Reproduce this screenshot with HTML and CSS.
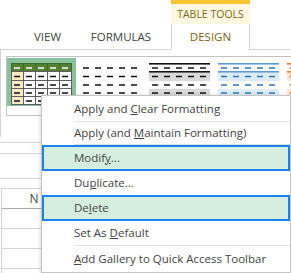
FILE: index.html
```html
<!DOCTYPE html>
<html>
<head>
<meta charset="utf-8">
<link rel="stylesheet" href="styles.css">
</head>
<body>
<div class="tabstrip">
  <div class="tab tab-view">VIEW</div>
  <div class="tab tab-formulas">FORMULAS</div>
  <div class="ctx">
    <div class="ctx-label">TABLE TOOLS</div>
    <div class="tab tab-design">DESIGN</div>
  </div>
</div>

<div class="ribbon">
  <div class="group">
    <div class="gallery">
      <div class="thumb thumb-selected">
        <svg width="61" height="42" viewBox="0 0 61 42">
          <rect width="61" height="42" fill="#fff"/>
          <rect width="61" height="9" fill="#548235"/>
          <rect x="1" y="9" width="11" height="33" fill="#fde9c4"/>
          <path d="M12.5 0V9M24.5 0V9M36.5 0V9M48.5 0V9" stroke="#3f6a26" stroke-width="1"/>
          <path d="M0.5 0V42M60.5 0V42M0 0.5H61" stroke="#3f6a26" stroke-width="1"/>
          <path d="M12.5 9V42M24.5 9V42M36.5 9V42M48.5 9V42M0.5 9V42M60.5 9V42M0 8.5H61M0 17.5H61M0 25.5H61M0 33.5H61M0 41.5H61" stroke="#5e5e5e" stroke-width="1"/>
          <path d="M3 5h6m6 0h6m6 0h6m6 0h6m6 0h6" stroke="#fff" stroke-width="1.6"/>
          <path d="M3 13.5h6m6 0h6m6 0h6m6 0h6m6 0h6M3 22h6m6 0h6m6 0h6m6 0h6m6 0h6M3 30h6m6 0h6m6 0h6m6 0h6m6 0h6M3 38h6m6 0h6m6 0h6m6 0h6m6 0h6" stroke="#111" stroke-width="1.6"/>
        </svg>
      </div>
      <div class="thumb">
        <svg width="61" height="42" viewBox="0 0 61 42">
          <path d="M3 5h6m6 0h6m6 0h6m6 0h6m6 0h6M3 13.5h6m6 0h6m6 0h6m6 0h6m6 0h6M3 22h6m6 0h6m6 0h6m6 0h6m6 0h6M3 30h6m6 0h6m6 0h6m6 0h6m6 0h6M3 38h6m6 0h6m6 0h6m6 0h6m6 0h6" stroke="#111" stroke-width="1.6"/>
        </svg>
      </div>
      <div class="thumb">
        <svg width="61" height="42" viewBox="0 0 61 42">
          <rect y="9.5" width="61" height="8.5" fill="#d9d9d9"/>
          <rect y="26" width="61" height="8.5" fill="#d9d9d9"/>
          <rect y="0" width="61" height="1.6" fill="#111"/>
          <rect y="8" width="61" height="1.6" fill="#111"/>
          <path d="M3 5h6m6 0h6m6 0h6m6 0h6m6 0h6M3 13.5h6m6 0h6m6 0h6m6 0h6m6 0h6M3 22h6m6 0h6m6 0h6m6 0h6m6 0h6M3 30h6m6 0h6m6 0h6m6 0h6m6 0h6M3 38h6m6 0h6m6 0h6m6 0h6m6 0h6" stroke="#111" stroke-width="1.6"/>
        </svg>
      </div>
      <div class="thumb">
        <svg width="61" height="42" viewBox="0 0 61 42">
          <rect y="9.5" width="61" height="8.5" fill="#ddebf7"/>
          <rect y="26" width="61" height="8.5" fill="#ddebf7"/>
          <rect y="0" width="61" height="1.6" fill="#5b9bd5"/>
          <rect y="8" width="61" height="1.6" fill="#5b9bd5"/>
          <path d="M3 5h6m6 0h6m6 0h6m6 0h6m6 0h6M3 13.5h6m6 0h6m6 0h6m6 0h6m6 0h6M3 22h6m6 0h6m6 0h6m6 0h6m6 0h6M3 30h6m6 0h6m6 0h6m6 0h6m6 0h6M3 38h6m6 0h6m6 0h6m6 0h6m6 0h6" stroke="#2e75b6" stroke-width="1.6"/>
        </svg>
      </div>
      <div class="thumb">
        <svg width="61" height="42" viewBox="0 0 61 42">
          <rect y="9.5" width="61" height="8.5" fill="#fce4d6"/>
          <rect y="26" width="61" height="8.5" fill="#fce4d6"/>
          <rect y="0" width="61" height="1.6" fill="#ed7d31"/>
          <rect y="8" width="61" height="1.6" fill="#ed7d31"/>
          <path d="M3 5h6m6 0h6m6 0h6m6 0h6m6 0h6M3 13.5h6m6 0h6m6 0h6m6 0h6m6 0h6M3 22h6m6 0h6m6 0h6m6 0h6m6 0h6M3 30h6m6 0h6m6 0h6m6 0h6m6 0h6M3 38h6m6 0h6m6 0h6m6 0h6m6 0h6" stroke="#c55a11" stroke-width="1.6"/>
        </svg>
      </div>
    </div>
  </div>
</div>

<div class="sheet">
  <div class="fline fline-1"></div>
  <div class="fline fline-2"></div>
  <div class="sheet-gap"></div>
  <div class="grid">
    <div class="colhead"><div class="col-n">N</div></div>
    <div class="row"></div>
    <div class="row"></div>
    <div class="row"></div>
    <div class="row row-end"></div>
  </div>
</div>

<div class="menu">
  <div class="item item-first">Apply and <span class="key">C</span>lear Formatting</div>
  <div class="sep"></div>
  <div class="item item-short">Apply (and <span class="key">M</span>aintain Formatting)</div>
  <div class="sep"></div>
  <div class="item item-hl">Modif<span class="key">y</span>...</div>
  <div class="item">Du<span class="key">p</span>licate...</div>
  <div class="item item-hl">De<span class="key">l</span>ete</div>
  <div class="item">Set As <span class="key">D</span>efault</div>
  <div class="sep"></div>
  <div class="item item-last"><span class="key">A</span>dd Gallery to Quick Access Toolbar</div>
</div>
</body>
</html>
```

FILE: styles.css
```css
* { box-sizing: border-box; }
html, body { margin: 0; padding: 0; }
body {
  width: 291px;
  height: 273px;
  overflow: hidden;
  position: relative;
  background: #fff;
  font-family: "Open Sans", "Noto Sans", sans-serif;
  color: #444;
}

.tabstrip {
  display: flex;
  align-items: flex-end;
  height: 50px;
  padding-left: 14px;
  box-shadow: inset 0 -1px #d5d5d5;
  font-size: 11.5px;
}
.tab {
  height: 26px;
  line-height: 26px;
  text-align: center;
  white-space: nowrap;
}
.tab-view { width: 67px; }
.tab-formulas { width: 80px; }
.ctx {
  margin-left: 10px;
  width: 79px;
  height: 50px;
  display: flex;
  flex-direction: column;
}
.ctx-label {
  height: 24px;
  border-top: 4px solid #f5c631;
  background: #fef8e1;
  color: #826414;
  font-size: 10.5px;
  line-height: 20px;
  text-align: center;
  white-space: nowrap;
}
.tab-design {
  background: #fff;
  border-left: 1px solid #d5d5d5;
  border-right: 1px solid #d5d5d5;
  color: #7d5f12;
}

.ribbon {
  height: 93px;
  border-bottom: 1px solid #d5d5d5;
  overflow: hidden;
}
.group {
  height: 87px;
  border-left: 1px solid #d5d5d5;
  padding: 6px 0 0 5px;
}
.gallery {
  display: flex;
  width: 400px;
  height: 60px;
  border: 1px solid #c2c2c2;
  border-right: 0;
  padding-top: 1px;
}
.thumb {
  flex: none;
  width: 69px;
  height: 48px;
  padding: 5px 4px 0;
}
.thumb svg { display: block; }
.thumb-selected { background: #88c19b; }

.fline { border-bottom: 1px solid #d5d5d5; }
.fline-1 { height: 11px; }
.fline-2 { height: 25px; }
.sheet-gap { height: 9px; }
.grid {
  margin-left: 1px;
  border-left: 1px solid #d5d5d5;
}
.colhead {
  height: 21px;
  border-top: 1px solid #d5d5d5;
  border-bottom: 1px solid #ababab;
}
.col-n {
  width: 64px;
  text-align: center;
  line-height: 19px;
  font-size: 12px;
  color: #4a4a4a;
}
.row {
  height: 20px;
  border-bottom: 1px solid #d5d5d5;
}
.row-end {
  height: 4px;
  border-bottom: 0;
}

.menu {
  position: absolute;
  left: 41px;
  top: 95px;
  width: 250px;
  border: 1px solid #c6c6c6;
  background: #fff;
  box-shadow: 0 1px 4px rgba(0, 0, 0, 0.22);
  font-size: 11.5px;
  color: #444;
}
.item {
  height: 24px;
  line-height: 24px;
  padding-left: 32px;
  white-space: nowrap;
}
.item-first { height: 25px; line-height: 25px; }
.item-short { height: 22px; line-height: 22px; }
.item-last { height: 26px; line-height: 26px; }
.item-hl {
  height: 26px;
  line-height: 22px;
  padding-left: 30px;
  border: 2px solid #1a84ec;
  background: #d5efdf;
}
.sep {
  height: 1px;
  margin-left: 32px;
  background: #e2e2e2;
}
.key { text-decoration: underline; }
```
